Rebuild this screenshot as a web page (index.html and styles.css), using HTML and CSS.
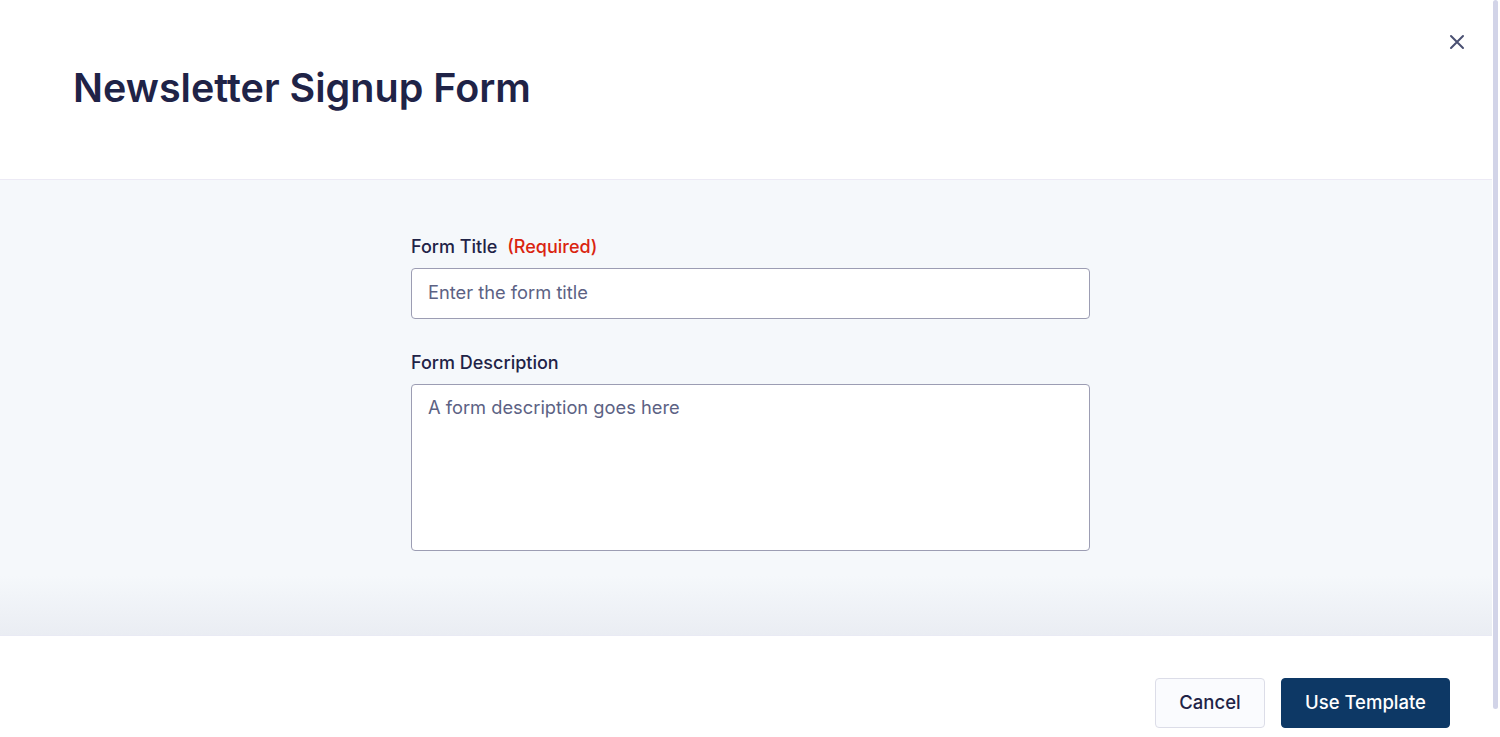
FILE: index.html
```html
<!DOCTYPE html>
<html lang="en">
<head>
<meta charset="utf-8">
<title>Newsletter Signup Form</title>
<link rel="stylesheet" href="styles.css">
</head>
<body>
<div class="page">
  <div class="modal">
    <header class="modal-header">
      <h1 class="modal-title">Newsletter Signup Form</h1>
      <button class="close-btn" aria-label="Close">
        <svg width="16" height="16" viewBox="0 0 16 16" aria-hidden="true">
          <path d="M2 2 L14 14 M14 2 L2 14" stroke="#4a5072" stroke-width="2" stroke-linecap="round" fill="none"/>
        </svg>
      </button>
    </header>
    <main class="modal-body">
      <form class="form">
        <div class="field">
          <label class="label">Form Title <span class="required">(Required)</span></label>
          <input class="input" type="text" placeholder="Enter the form title">
        </div>
        <div class="field">
          <label class="label">Form Description</label>
          <textarea class="input textarea" placeholder="A form description goes here"></textarea>
        </div>
      </form>
    </main>
    <footer class="modal-footer">
      <button class="btn btn-secondary" type="button">Cancel</button>
      <button class="btn btn-primary" type="button">Use Template</button>
    </footer>
  </div>
  <div class="scrollbar"><div class="thumb"></div></div>
</div>
</body>
</html>
```

FILE: styles.css
```css
* { box-sizing: border-box; }
html, body { margin: 0; padding: 0; height: 100%; }
body {
  font-family: Inter, "Noto Sans", "Liberation Sans", sans-serif;
  background: #ffffff;
  overflow: hidden;
  color: #1f2347;
}
.page {
  display: flex;
  height: 737px;
}
.modal {
  flex: 1;
  display: flex;
  flex-direction: column;
  position: relative;
  min-width: 0;
}
.modal-header {
  height: 180px;
  flex: none;
  display: flex;
  align-items: center;
  padding: 0 73px 4px;
  border-bottom: 1px solid #eceaf5;
  background: #fff;
}
.modal-title {
  margin: 0;
  font-size: 39.5px;
  font-weight: 600;
  color: #1f2347;
  letter-spacing: 0;
}
.close-btn {
  position: absolute;
  top: 34px;
  right: 27px;
  width: 16px;
  height: 16px;
  padding: 0;
  border: 0;
  background: none;
  cursor: pointer;
  display: flex;
}
.modal-body {
  height: 456px;
  flex: none;
  background: linear-gradient(to bottom, #f5f8fb 0%, #f5f8fb 87%, #eaedf3 100%);
  border-bottom: 1px solid #e9eaf4;
  display: flex;
  justify-content: center;
  padding: 56px 0 0 9px;
}
.form {
  width: 679px;
  display: flex;
  flex-direction: column;
  gap: 33px;
}
.field {
  display: flex;
  flex-direction: column;
  gap: 10px;
}
.label {
  font-size: 18px;
  font-weight: 500;
  color: #1f2347;
  line-height: 22px;
}
.required {
  color: #da2410;
  margin-left: 5px;
}
.input {
  height: 51px;
  border: 1px solid #9c9db3;
  border-radius: 4px;
  background: #fff;
  font-family: inherit;
  font-size: 18.3px;
  color: #1f2347;
  padding: 0 16px 3px;
  outline: none;
}
.input::placeholder { color: #5c6284; opacity: 1; }
.textarea {
  height: 167px;
  resize: none;
  padding: 10px 16px;
  line-height: 24px;
}
.modal-footer {
  flex: 1;
  display: flex;
  justify-content: flex-end;
  align-items: flex-start;
  gap: 16px;
  padding: 42px 42px 0 0;
  background: #fff;
}
.btn {
  height: 50px;
  border-radius: 4px;
  font-family: inherit;
  font-size: 18.5px;
  font-weight: 500;
  padding: 0 0 2px;
  white-space: nowrap;
  cursor: pointer;
}
.btn-secondary {
  width: 110px;
  background: #fafbfe;
  border: 1px solid #dcdde8;
  color: #1f2347;
}
.btn-secondary:hover { background: #f2f3f8; }
.btn-primary {
  width: 169px;
  background: #0d3865;
  border: 1px solid #0d3865;
  color: #fff;
}
.scrollbar {
  width: 8px;
  flex: none;
  background: #fff;
  padding-left: 1px;
}
.thumb {
  width: 5px;
  height: 709px;
  background: #d2d4e8;
  border-radius: 3px;
}
```
